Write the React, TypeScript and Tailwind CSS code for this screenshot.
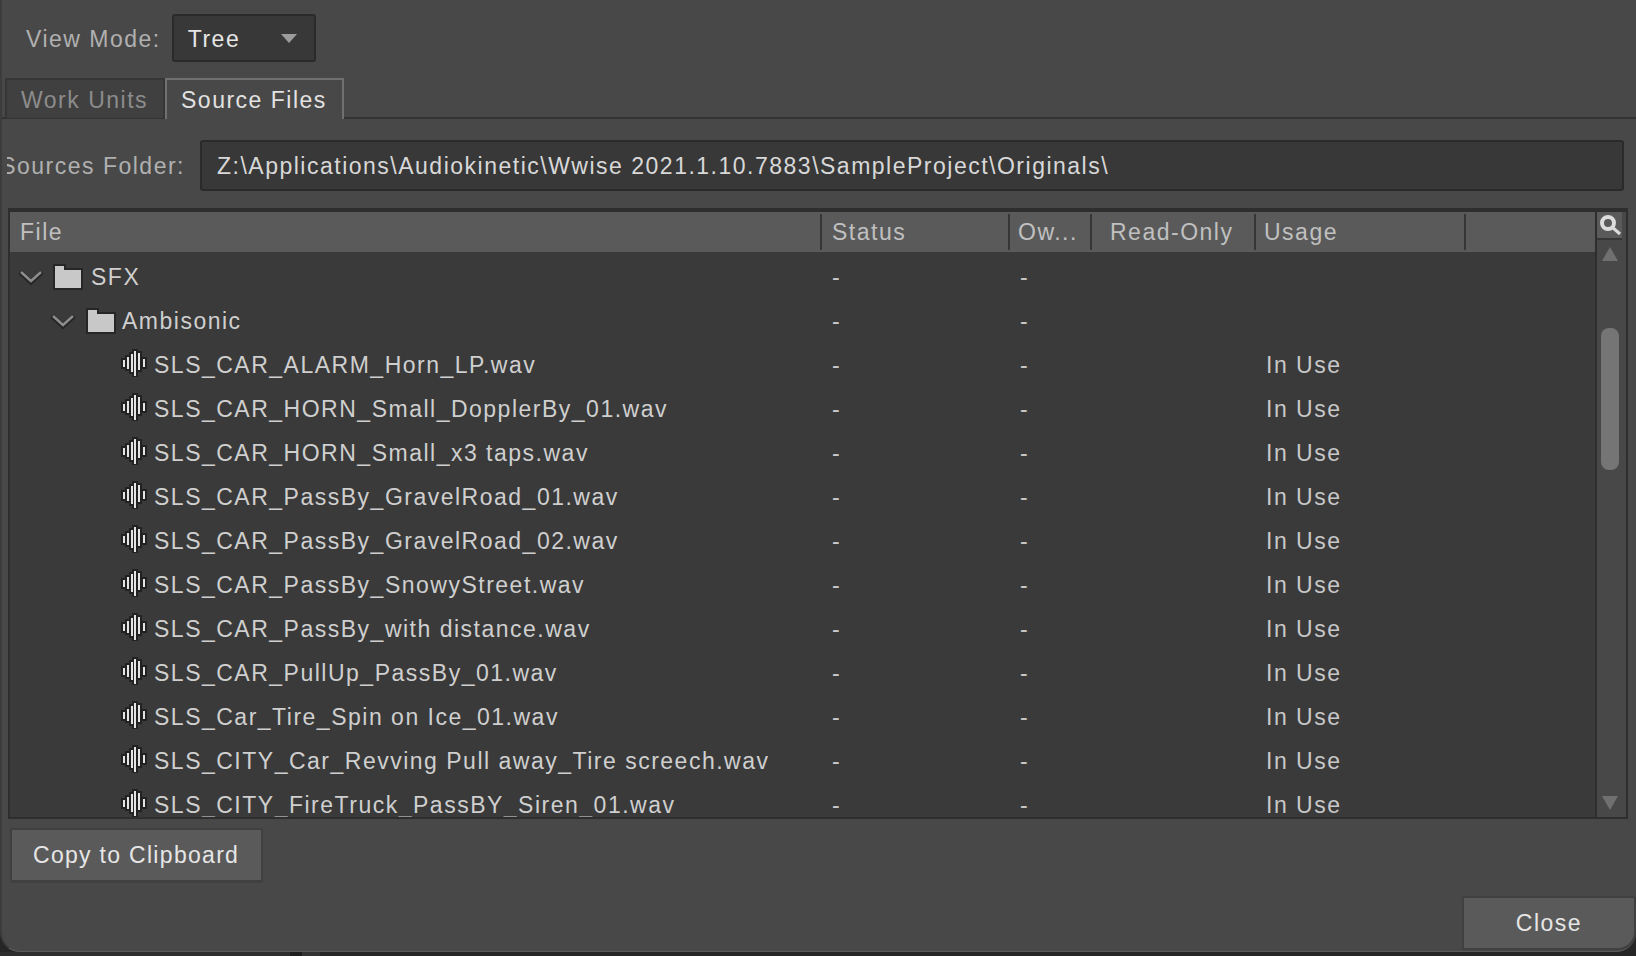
import type { ReactNode } from 'react';

const files = [
  'SLS_CAR_ALARM_Horn_LP.wav',
  'SLS_CAR_HORN_Small_DopplerBy_01.wav',
  'SLS_CAR_HORN_Small_x3 taps.wav',
  'SLS_CAR_PassBy_GravelRoad_01.wav',
  'SLS_CAR_PassBy_GravelRoad_02.wav',
  'SLS_CAR_PassBy_SnowyStreet.wav',
  'SLS_CAR_PassBy_with distance.wav',
  'SLS_CAR_PullUp_PassBy_01.wav',
  'SLS_Car_Tire_Spin on Ice_01.wav',
  'SLS_CITY_Car_Revving Pull away_Tire screech.wav',
  'SLS_CITY_FireTruck_PassBY_Siren_01.wav',
];

function Chevron() {
  return (
    <svg width="26" height="18" viewBox="0 0 26 18" className="shrink-0">
      <path d="M2 4l11 10L24 4" fill="none" stroke="#262626" strokeWidth="5" />
      <path d="M3 4l10 9L23 4" fill="none" stroke="#8c8c8c" strokeWidth="2.5" />
    </svg>
  );
}

function Folder() {
  return (
    <svg width="30" height="26" viewBox="0 0 30 26" className="shrink-0" shapeRendering="crispEdges">
      <path d="M0 0h13v4h17v22H0z" fill="#262626" />
      <path d="M2 2h9v4h17v18H2z" fill="#c8c8c8" />
    </svg>
  );
}

function Wave() {
  // x, top, height of each bar
  const bars = [
    [3, 11, 7],
    [7, 8, 12],
    [11, 5, 18],
    [14, 2, 25],
    [18, 4, 17],
    [23, 10, 8],
  ];
  return (
    <svg width="27" height="28" viewBox="0 0 27 28" className="shrink-0" shapeRendering="crispEdges">
      {bars.map(([x, y, h]) => (
        <rect key={x} x={x - 2} y={y - 2} width="6" height={h + 4} fill="#222222" />
      ))}
      {bars.map(([x, y, h]) => (
        <rect key={x} x={x} y={y} width="2" height={h} fill="#e4e4e4" />
      ))}
    </svg>
  );
}

function Row({ indent, label, usage, children }: { indent: string; label: string; usage?: string; children: ReactNode }) {
  return (
    <div className="flex h-[44px] shrink-0 items-center">
      <div className={`flex w-[812px] shrink-0 items-center ${indent}`}>
        {children}
        <span className="whitespace-nowrap text-[#cfcfcf]">{label}</span>
      </div>
      <div className="w-[188px] shrink-0 pl-[10px] text-[#c8c8c8]">-</div>
      <div className="w-[246px] shrink-0 pl-[10px] text-[#c8c8c8]">-</div>
      <div className="pl-[10px] text-[#c8c8c8]">{usage}</div>
    </div>
  );
}

function HeaderCell({ width, className, children }: { width: string; className?: string; children?: ReactNode }) {
  return (
    <div className={`flex h-[36px] shrink-0 items-center border-r-2 border-[#363636] ${width} ${className ?? ''}`}>
      {children}
    </div>
  );
}

export default function App() {
  return (
    <div
      className="flex h-[956px] w-[1636px] flex-col overflow-hidden bg-[#262626] text-[23px] tracking-[1.5px] text-[#b4b4b4]"
      style={{ fontFamily: '"Liberation Sans", Arial, sans-serif' }}
    >
      <div className="flex h-[952px] shrink-0 flex-col rounded-bl-[20px] rounded-br-[20px] border-b border-l-2 border-b-[#5a5a5a] border-l-[#3c3c3c] bg-[#484848]">
        {/* View mode */}
        <div className="flex h-[78px] items-start pl-[24px] pt-[14px]">
          <span className="mr-[11px] flex h-[48px] items-center pt-[3px] text-[#b0b0b0]">View Mode:</span>
          <div className="flex h-[48px] w-[144px] items-center justify-between rounded-[3px] border-2 border-[#2a2a2a] bg-[#383838] pl-[14px] pr-[17px] text-[#e6e6e6]">
            <span className="pt-[3px]">Tree</span>
            <svg width="16" height="9" viewBox="0 0 16 9"><path d="M0 0h16L8 9z" fill="#9c9c9c" /></svg>
          </div>
        </div>

        {/* Tabs */}
        <div className="flex h-[41px] border-b-2 border-[#333333] pl-[3px]">
          <div className="flex h-[40px] w-[160px] items-center border-x-2 border-t-2 border-[#363636] bg-[#404040] pl-[14px] pt-[2px] text-[#8c8c8c]">Work Units</div>
          <div className="z-10 flex h-[41px] w-[179px] items-center border-x-2 border-t-2 border-[#707070] bg-[#484848] pl-[14px] pt-[2px] text-[#e2e2e2]">Source Files</div>
        </div>

        {/* Sources folder: the label is clipped on its left in the dialog */}
        <div className="flex h-[89px] items-start pt-[21px]">
          <div className="ml-[5px] flex h-[51px] w-[178px] items-center justify-end overflow-hidden whitespace-nowrap pt-[2px] text-[#b0b0b0]">
            Sources Folder:
          </div>
          <div className="ml-[15px] flex h-[51px] w-[1424px] items-center rounded-[3px] border-2 border-[#2a2a2a] bg-[#383838] pl-[15px] pt-[2px] text-[#d8d8d8]">
            {'Z:\\Applications\\Audiokinetic\\Wwise 2021.1.10.7883\\SampleProject\\Originals\\'}
          </div>
        </div>

        {/* File list */}
        <div className="ml-[6px] flex h-[611px] w-[1620px] border-2 border-t-4 border-[#2e2e2e] bg-[#3a3a3a]">
          <div className="flex min-w-0 flex-1 flex-col overflow-hidden">
            <div className="flex h-[40px] shrink-0 items-center bg-[#5a5a5a] text-[#c0c0c0]">
              <HeaderCell width="w-[812px]" className="pl-[10px]">File</HeaderCell>
              <HeaderCell width="w-[188px]" className="pl-[10px]">Status</HeaderCell>
              <HeaderCell width="w-[82px]" className="pl-[8px]">Ow...</HeaderCell>
              <HeaderCell width="w-[164px]" className="pl-[18px]">Read-Only</HeaderCell>
              <HeaderCell width="w-[210px]" className="pl-[8px]">Usage</HeaderCell>
            </div>
            <div className="flex flex-col pt-[3px]">
              <Row indent="pl-[8px]" label="SFX">
                <Chevron />
                <span className="ml-[9px] mr-[8px]"><Folder /></span>
              </Row>
              <Row indent="pl-[40px]" label="Ambisonic">
                <Chevron />
                <span className="ml-[10px] mr-[6px]"><Folder /></span>
              </Row>
              {files.map((f) => (
                <Row key={f} indent="pl-[110px]" label={f} usage="In Use">
                  <span className="mr-[7px] -translate-y-[2px]"><Wave /></span>
                </Row>
              ))}
            </div>
          </div>

          {/* Scroll column */}
          <div className="flex w-[31px] shrink-0 flex-col items-center border-l-2 border-[#2e2e2e] bg-[#484848] pr-[4px]">
            <div className="flex h-[28px] w-full items-center justify-center border-b-2 border-[#363636] bg-[#5a5a5a]">
              <svg width="22" height="22" viewBox="0 0 22 22">
                <circle cx="9" cy="9" r="6" fill="none" stroke="#dcdcdc" strokeWidth="4" />
                <path d="M13 13l8 7" stroke="#dcdcdc" strokeWidth="3" />
              </svg>
            </div>
            <svg width="16" height="14" viewBox="0 0 16 14" className="mt-[7px]"><path d="M8 0l8 14H0z" fill="#707070" /></svg>
            <div className="mt-[67px] h-[142px] w-[18px] rounded-[8px] bg-[#757575]" />
            <div className="flex-1" />
            <svg width="16" height="14" viewBox="0 0 16 14" className="mb-[7px]"><path d="M0 0h16L8 14z" fill="#707070" /></svg>
          </div>
        </div>

        {/* Footer */}
        <div className="flex min-h-0 flex-1 flex-col pl-[8px] pt-[9px]">
          <button className="flex h-[55px] w-[253px] items-center rounded-[2px] border-2 border-b-[3px] border-[#404040] bg-[#5a5a5a] pl-[21px] tracking-[1.3px] text-[#e6e6e6]">
            Copy to Clipboard
          </button>
          <div className="mt-[13px] flex justify-end">
            <button className="h-[54px] w-[174px] rounded-tl-[3px] rounded-tr-[3px] rounded-br-[18px] border-2 border-[#404040] bg-[#5a5a5a] text-[#e6e6e6]">
              Close
            </button>
          </div>
        </div>
      </div>
      {/* sliver of the window behind the dialog */}
      <div className="flex h-[4px]">
        <div className="h-full w-[290px] bg-[#2e2e2e]" />
        <div className="h-full w-[12px] bg-[#1e1e1e]" />
        <div className="h-full w-[18px] bg-[#333333]" />
      </div>
    </div>
  );
}
